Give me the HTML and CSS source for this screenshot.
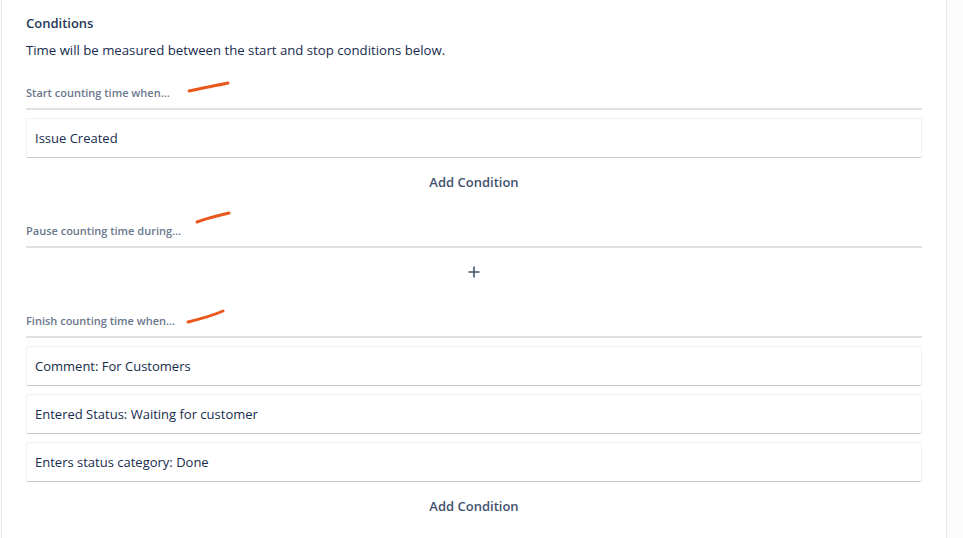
FILE: index.html
```html
<!DOCTYPE html>
<html>
<head>
<meta charset="utf-8">
<link rel="stylesheet" href="styles.css">
</head>
<body>
<div class="panel">
  <h2 class="title">Conditions</h2>
  <p class="desc">Time will be measured between the start and stop conditions below.</p>

  <section class="group">
    <div class="label">Start counting time when...
      <svg class="scribble s1" width="44" height="14" viewBox="0 0 44 14"><path d="M2 11 C 14 8, 28 6, 41 3" /></svg>
    </div>
    <div class="items">
      <div class="card">Issue Created</div>
    </div>
    <button class="action">Add Condition</button>
  </section>

  <section class="group">
    <div class="label">Pause counting time during...
      <svg class="scribble s2" width="40" height="14" viewBox="0 0 40 14"><path d="M2 11 C 12 7, 22 5, 34 2" /></svg>
    </div>
    <button class="action plus">
      <svg width="12" height="12" viewBox="0 0 12 12"><path d="M6 0.5 V11.5 M0.5 6 H11.5" /></svg>
    </button>
  </section>

  <section class="group">
    <div class="label">Finish counting time when...
      <svg class="scribble s3" width="40" height="16" viewBox="0 0 40 16"><path d="M2 13 C 14 10, 26 7, 37 2" /></svg>
    </div>
    <div class="items">
      <div class="card">Comment: For Customers</div>
      <div class="card">Entered Status: Waiting for customer</div>
      <div class="card">Enters status category: Done</div>
    </div>
    <button class="action">Add Condition</button>
  </section>
</div>
</body>
</html>
```

FILE: styles.css
```css
html, body {
  margin: 0;
  padding: 0;
  background: #fcfcfc;
}
body {
  font-family: "Open Sans", "Noto Sans", sans-serif;
  color: #172b4d;
  width: 963px;
  height: 538px;
  overflow: hidden;
}
.panel {
  margin-left: 1px;
  width: 896px;
  height: 538px;
  box-sizing: content-box;
  background: #ffffff;
  border-left: 1px solid #ebecf0;
  border-right: 1px solid #ebecf0;
  padding: 13px 24px 0 24px;
}
.title {
  margin: 0;
  font-size: 13px;
  font-weight: 600;
  line-height: 20px;
  color: #253858;
}
.desc {
  margin: 7px 0 0 0;
  font-size: 13.2px;
  line-height: 20px;
}
.group {
  margin-top: 25px;
  display: flex;
  flex-direction: column;
}
.label {
  position: relative;
  font-size: 11px;
  font-weight: 600;
  color: #6b778c;
  line-height: 16px;
  padding-bottom: 7px;
  border-bottom: 2px solid #dfe1e6;
}
.scribble {
  position: absolute;
  overflow: visible;
}
.scribble path {
  fill: none;
  stroke: #e8581c;
  stroke-width: 3px;
  stroke-linecap: round;
}
.s1 { left: 161px; top: -5px; }
.s2 { left: 169px; top: -12px; }
.s3 { left: 160px; top: -4px; }
.items {
  display: flex;
  flex-direction: column;
  gap: 8px;
  margin-top: 8px;
}
.card {
  height: 38px;
  line-height: 38px;
  padding: 0 8px;
  border: 1px solid #f0f1f3;
  border-bottom-color: #c7cbd1;
  border-radius: 2px;
  font-size: 13px;
  color: #172b4d;
  background: #fff;
}
.action {
  margin-top: 8px;
  height: 32px;
  align-self: center;
  border: 0;
  background: transparent;
  font-family: inherit;
  font-size: 13px;
  font-weight: 600;
  color: #42526e;
  padding: 0 8px;
  display: flex;
  align-items: center;
}
.plus svg path {
  stroke: #42526e;
  stroke-width: 1.6px;
  fill: none;
}
```
